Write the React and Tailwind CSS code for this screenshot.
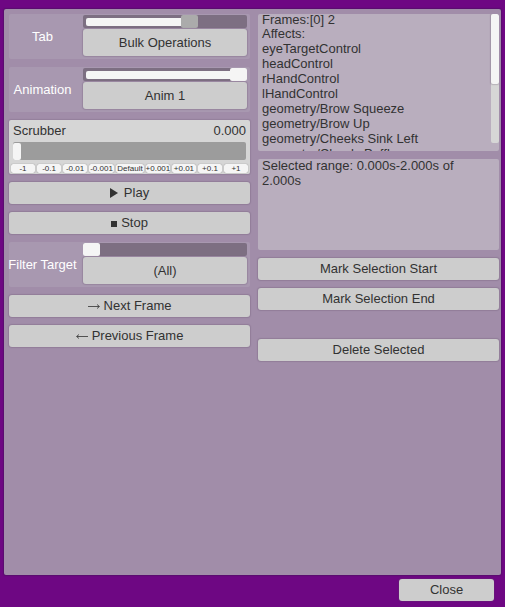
import { useId, useState } from "react";

const STEPS = ["-1", "-0.1", "-0.01", "-0.001", "Default", "+0.001", "+0.01", "+0.1", "+1"];

const AFFECTS = [
  "eyeTargetControl",
  "headControl",
  "rHandControl",
  "lHandControl",
  "geometry/Brow Squeeze",
  "geometry/Brow Up",
  "geometry/Cheeks Sink Left",
  "geometry/CheeksPuffLower",
];

function Button({ children, className = "h-[22px]" }) {
  return (
    <button
      type="button"
      className={`flex w-full shrink-0 items-center justify-center gap-1 whitespace-nowrap rounded-[3px] bg-[#cdcdcd] pb-px text-[13px] leading-none text-[#323232] shadow-[0_0_1px_1px_rgba(90,70,100,0.22)] ${className}`}
    >
      {children}
    </button>
  );
}

function Chooser({ label, text, initial, max, thumb }) {
  const id = useId();
  const [value, setValue] = useState(initial);
  const percent = (value / max) * 100;
  return (
    <div className="flex h-[45px] items-start rounded-[2px] bg-[#a898b0] pr-[3px] pt-px">
      <label
        htmlFor={id}
        className="flex h-[43px] w-[67px] shrink-0 items-center justify-center whitespace-nowrap text-[13px] text-white"
      >
        {label}
      </label>
      <div className="ml-[7px] flex min-w-0 flex-1 flex-col gap-px">
        <div className="grid h-[13px] items-center rounded-[2px] bg-[#7d6f82]">
          <div className="col-start-1 row-start-1 pl-[3px] pr-[17px]">
            <div className="h-2 rounded-l-[2px] bg-[#f5f5f5]" style={{ width: `${percent}%` }} />
          </div>
          <input
            id={id}
            type="range"
            min="0"
            max={max}
            value={value}
            onChange={(e) => setValue(Number(e.target.value))}
            className={`col-start-1 row-start-1 h-[13px] w-full appearance-none bg-transparent [&::-webkit-slider-thumb]:h-[13px] [&::-webkit-slider-thumb]:w-[17px] [&::-webkit-slider-thumb]:appearance-none [&::-webkit-slider-thumb]:rounded-[2px] ${thumb}`}
          />
        </div>
        <Button className="h-[27px]">{text}</Button>
      </div>
    </div>
  );
}

function Scrubber() {
  const [time, setTime] = useState(0);
  return (
    <div className="flex h-[54px] flex-col rounded-[2px] bg-[#d6d6d6] px-0.5 pt-[3px] shadow-[0_0_1px_1px_rgba(90,70,100,0.18)]">
      <div className="flex justify-between px-0.5 text-[13px] leading-[15px] text-[#323232]">
        <label htmlFor="scrubber">Scrubber</label>
        <output htmlFor="scrubber">{time.toFixed(3)}</output>
      </div>
      <div className="px-0.5 pt-1">
        <input
          id="scrubber"
          type="range"
          min="0"
          max="2"
          step="0.001"
          value={time}
          onChange={(e) => setTime(Number(e.target.value))}
          className="block h-[18px] w-full appearance-none rounded-[2px] bg-[#9c9c9c] [&::-webkit-slider-thumb]:h-[17px] [&::-webkit-slider-thumb]:w-2 [&::-webkit-slider-thumb]:appearance-none [&::-webkit-slider-thumb]:rounded-[2px] [&::-webkit-slider-thumb]:bg-[#f5f5f5]"
        />
      </div>
      <div className="mt-1 grid grid-cols-[25fr_25fr_25fr_26fr_29fr_25fr_25fr_25fr_25fr] gap-0.5">
        {STEPS.map((step) => (
          <button
            key={step}
            type="button"
            className="flex h-[9px] min-w-0 items-center justify-center whitespace-nowrap rounded-[2px] bg-[#f5f5f5] text-[8px] leading-none text-[#323232] shadow-[0_0_1px_rgba(0,0,0,0.5)]"
          >
            {step}
          </button>
        ))}
      </div>
    </div>
  );
}

export default function App() {
  return (
    <div className="flex min-h-screen flex-col bg-[#6e0783] px-1 pb-1.5 pt-[9px] font-['Liberation_Sans',Arial,sans-serif]">
      <main className="flex flex-1 gap-2 rounded-[2px] bg-[#a18da9] pb-4 pl-[5px] pr-0.5 pt-[5px] shadow-[0_0_1px_1px_rgba(70,20,90,0.5)]">
        <section className="flex min-w-0 flex-1 flex-col gap-2">
          <Chooser
            label="Tab"
            text="Bulk Operations"
            initial={6}
            max={9}
            thumb="[&::-webkit-slider-thumb]:bg-[#ababab]"
          />
          <Chooser
            label="Animation"
            text="Anim 1"
            initial={1}
            max={1}
            thumb="[&::-webkit-slider-thumb]:bg-[#f5f5f5]"
          />
          <Scrubber />
          <Button>
            <svg className="mr-0.5 h-[10px] w-2" viewBox="0 0 8 10" fill="currentColor" aria-hidden="true">
              <path d="M0 0 8 5 0 10Z" />
            </svg>
            Play
          </Button>
          <Button>
            <svg className="mt-0.5 h-1.5 w-1.5" viewBox="0 0 6 6" fill="currentColor" aria-hidden="true">
              <path d="M0 0H6V6H0Z" />
            </svg>
            Stop
          </Button>
          <Chooser
            label="Filter Target"
            text="(All)"
            initial={0}
            max={5}
            thumb="[&::-webkit-slider-thumb]:bg-[#f5f5f5]"
          />
          <Button>
            <svg className="mt-0.5 h-[7px] w-3" viewBox="0 0 12 7" fill="none" stroke="currentColor" aria-hidden="true">
              <path d="M0 3.5H11M9 1.5 11.5 3.5 9 5.5" strokeWidth="0.8" />
            </svg>
            Next Frame
          </Button>
          <Button>
            <svg className="mt-0.5 h-[7px] w-3" viewBox="0 0 12 7" fill="none" stroke="currentColor" aria-hidden="true">
              <path d="M12 3.5H1M3 1.5 0.5 3.5 3 5.5" strokeWidth="0.8" />
            </svg>
            Previous Frame
          </Button>
        </section>

        <section className="flex min-w-0 flex-1 flex-col gap-2 text-[13px] leading-[15px] text-[#323232]">
          <div className="flex h-[137px] overflow-hidden rounded-[2px] bg-[#b9aebe]">
            <div className="-mt-px min-w-0 flex-1 pl-1">
              <p className="leading-[14px]">Frames:[0] 2</p>
              <p className="leading-[14px]">Affects:</p>
              <ul>
                {AFFECTS.map((name) => (
                  <li key={name}>{name}</li>
                ))}
              </ul>
            </div>
            <div className="h-[129px] w-2 rounded-[2px] bg-[#d6d6d6]">
              <div className="h-[70px] rounded-[2px] bg-[#f5f5f5] shadow-[0_0_1px_1px_rgba(90,70,100,0.25)]" />
            </div>
          </div>
          <div className="h-[91px] rounded-[2px] bg-[#b9aebe] px-1">
            <p className="-mt-px">Selected range: 0.000s-2.000s of 2.000s</p>
          </div>
          <Button>Mark Selection Start</Button>
          <Button>Mark Selection End</Button>
          <div className="h-[13px]" />
          <Button>Delete Selected</Button>
        </section>
      </main>
      <footer className="flex justify-end pr-[7px] pt-1">
        <div className="w-[95px]">
          <Button>Close</Button>
        </div>
      </footer>
    </div>
  );
}
